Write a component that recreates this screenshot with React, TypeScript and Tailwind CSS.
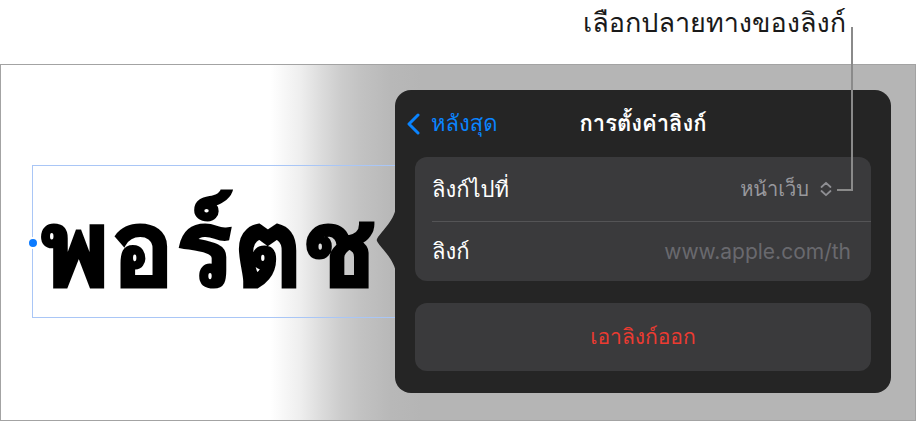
import React from "react";

const thai = "font-['Loma','FreeSans','Noto_Sans_Thai',sans-serif]";

const BackChevron = () => (
	<svg width="16" height="22" viewBox="0 0 16 22" fill="none">
		<path d="M13 2 L4 11 L13 20" stroke="#0a84ff" strokeWidth="3" strokeLinecap="round" strokeLinejoin="round" />
	</svg>
);

const UpDown = () => (
	<svg width="14" height="16" viewBox="0 0 14 16" fill="none">
		<path d="M2.5 6 L7 1.8 L11.5 6" stroke="#8e8e93" strokeWidth="1.8" strokeLinecap="round" strokeLinejoin="round" />
		<path d="M2.5 10 L7 14.2 L11.5 10" stroke="#8e8e93" strokeWidth="1.8" strokeLinecap="round" strokeLinejoin="round" />
	</svg>
);

const Popover = () => (
	<div className="absolute left-[394px] top-[25px] w-[496px] h-[303px] rounded-[16px] bg-[#252525] px-[20px] flex flex-col">
		<svg className="absolute left-[-19px] top-[115px]" width="20" height="70" viewBox="0 0 20 70">
			<path d="M20 0 C20 14 5 27 1.5 33 Q0 35 1.5 37 C5 43 20 56 20 70 Z" fill="#252525" />
		</svg>
		<div className="h-[67px] flex items-center relative">
			<div className="flex items-center gap-[10px] ml-[-10px] text-[#0a84ff] text-[22px]">
				<BackChevron />
				<span>หลังสุด</span>
			</div>
			<div className="absolute inset-0 flex items-center justify-center text-white text-[22px] font-bold">
				การตั้งค่าลิงก์
			</div>
		</div>
		<div className="rounded-[12px] bg-[#3a3a3c] flex flex-col">
			<div className="h-[64px] flex items-center justify-between pl-[17px] pr-[38px]">
				<span className="text-white text-[22px]">ลิงก์ไปที่</span>
				<span className="flex items-center gap-[10px] text-[#98989d] text-[20px]">
					หน้าเว็บ
					<UpDown />
				</span>
			</div>
			<div className="ml-[17px] h-px bg-[#545456]" />
			<div className="h-[59px] flex items-center justify-between pl-[17px] pr-[20px]">
				<span className="text-white text-[22px]">ลิงก์</span>
				<span className="text-[#69696e] text-[21px] font-['Inter',sans-serif]">www.apple.com/th</span>
			</div>
		</div>
		<div className="mt-[22px] h-[68px] rounded-[12px] bg-[#3a3a3c] flex items-center justify-center text-[21px] text-[#ec3a31]">
			เอาลิงก์ออก
		</div>
	</div>
);

export default function App() {
	return (
		<div className={`w-[918px] h-[423px] bg-white relative overflow-hidden ${thai}`}>
			<div className="h-[64px] flex justify-end pr-[72px] pt-[4px]">
				<span className="text-[27px] text-[#1a1a1a] leading-[38px]">เลือกปลายทางของลิงก์</span>
			</div>
			<div className="w-[916px] h-[357px] border border-[#a3a3a3] relative bg-[linear-gradient(to_right,#ffffff_29.5%,#eeeeee_32.8%,#dcdcdc_35%,#cccccc_37.2%,#c2c2c2_39.4%,#b8b8b8_42.7%,#b5b5b5_46%)] pl-[31px] pt-[100px]">
				<div className="relative w-[380px] h-[153px] border border-[#a9c6f6]">
					<div className="absolute left-[-6px] top-[71px] w-[12px] h-[12px] rounded-full bg-[#0a7aff] border-2 border-white" />
					<div className="pl-[6px] pt-[20px] text-[108px] font-bold leading-[124px] text-black whitespace-nowrap [-webkit-text-stroke:3px_black]">
						พอร์ตช
					</div>
				</div>
				<Popover />
			</div>
			<svg className="absolute left-0 top-0" width="918" height="423">
				<path d="M852 27 V190 H837" stroke="#8a8a8a" strokeWidth="2" fill="none" />
			</svg>
		</div>
	);
}
